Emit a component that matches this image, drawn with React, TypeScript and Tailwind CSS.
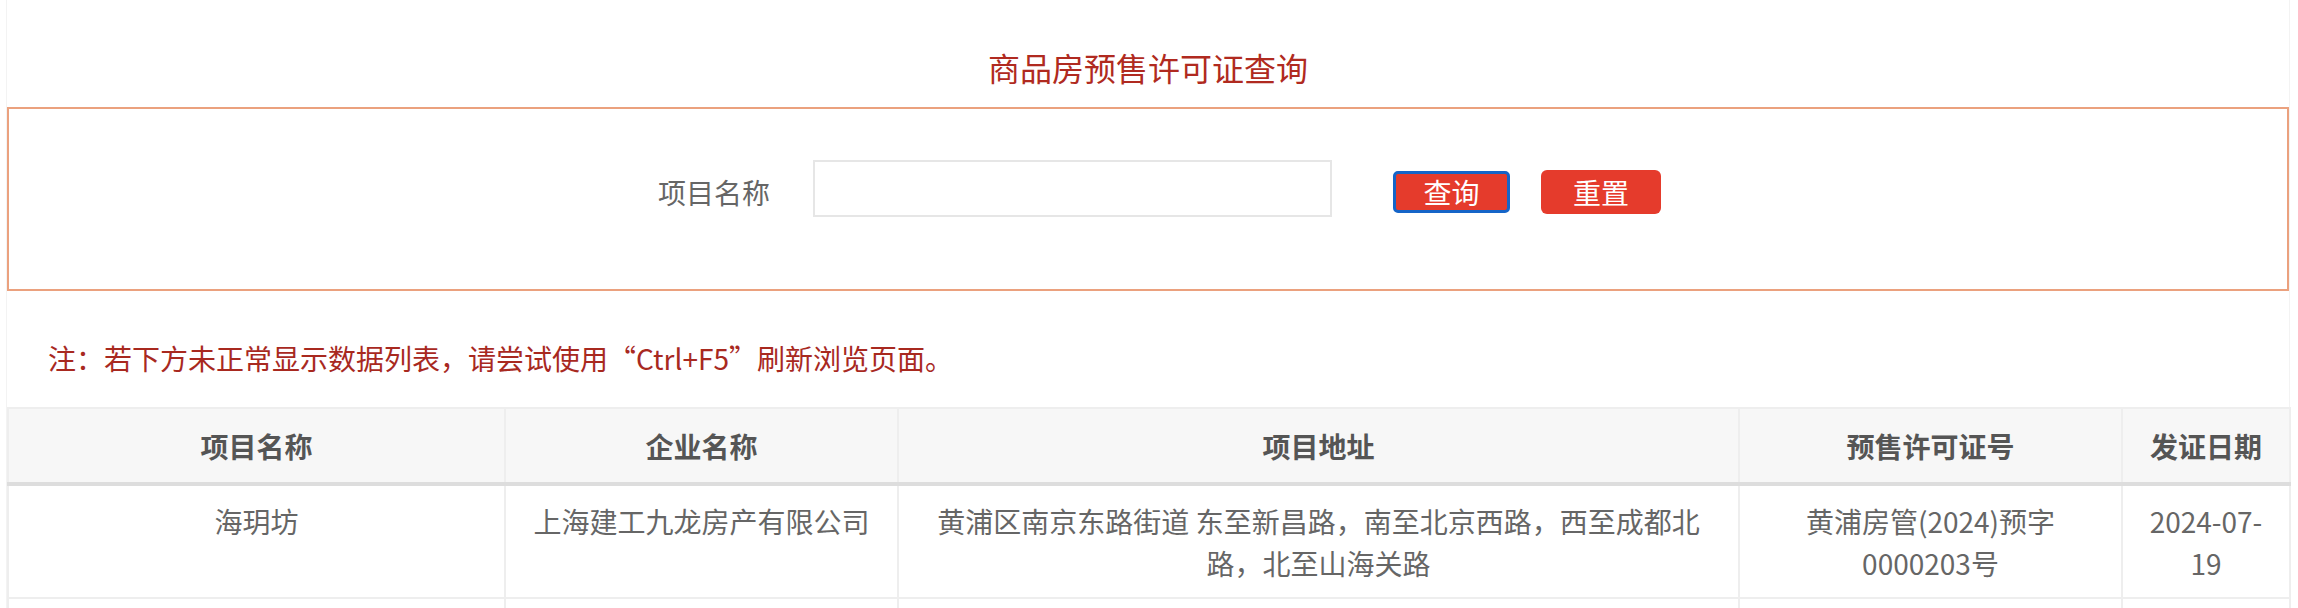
const rows = [
  {
    name: "海玥坊",
    company: "上海建工九龙房产有限公司",
    address: ["黄浦区南京东路街道 东至新昌路，南至北京西路，西至成都北", "路，北至山海关路"],
    permit: ["黄浦房管(2024)预字", "0000203号"],
    date: ["2024-07-", "19"],
  },
];

function Lines({ parts }: { parts: string[] }) {
  return (
    <>
      {parts.map((p, i) => (
        <span key={i}>
          {i > 0 && <br />}
          {p}
        </span>
      ))}
    </>
  );
}

export default function App() {
  return (
    <div
      lang="zh-CN"
      className="w-[2298px] h-[608px] overflow-hidden bg-white font-['Noto_Sans_CJK_SC','Noto_Sans',sans-serif]"
    >
      <div className="ml-[6px] w-[2284px] min-h-[608px] border-x border-[#f3f3f3]">
        <h1 className="h-[107px] pt-[51px] text-center text-[32px] leading-[32px] font-normal text-[#b02a20]">
          商品房预售许可证查询
        </h1>

        <div className="h-[184px] border-2 border-[#eba17e] pt-[51px]">
          <div className="flex justify-center pl-[23px] h-[57px]">
            <label className="w-[155px] pt-[11px] text-[28px] leading-[42px] text-[#666] self-start">
              项目名称
            </label>
            <input
              type="text"
              className="w-[519px] h-[57px] border-2 border-[#e6e6e6] outline-none px-3 text-[26px] text-[#333]"
            />
            <button
              type="button"
              className="ml-[61px] mt-[11px] w-[117px] h-[42px] rounded-[5px] border-[3px] border-[#1565c8] bg-[#e53b2c] text-white text-[28px] leading-none flex items-center justify-center"
            >
              查询
            </button>
            <button
              type="button"
              className="ml-[31px] mt-[10px] w-[120px] h-[44px] rounded-[6px] bg-[#e53b2c] text-white text-[28px] leading-none flex items-center justify-center"
            >
              重置
            </button>
          </div>
        </div>

        <p className="mt-[46px] pl-[41px] text-[28px] leading-[42px] text-[#a8291f]">
          注：若下方未正常显示数据列表，请尝试使用“Ctrl+F5”刷新浏览页面。
        </p>

        <table className="mt-[28px] w-full table-fixed border-collapse">
          <colgroup>
            <col className="w-[497px]" />
            <col className="w-[393px]" />
            <col className="w-[841px]" />
            <col className="w-[383px]" />
            <col className="w-[168px]" />
          </colgroup>
          <thead>
            <tr className="bg-[#f7f7f7] h-[76px]">
              {["项目名称", "企业名称", "项目地址", "预售许可证号", "发证日期"].map((h) => (
                <th
                  key={h}
                  className="border-2 border-b-4 border-[#eee] border-b-[#ddd] text-[28px] font-bold text-[#555] text-center align-middle"
                >
                  {h}
                </th>
              ))}
            </tr>
          </thead>
          <tbody>
            {rows.map((r) => (
              <tr key={r.name}>
                <td className="border-2 border-[#eee] px-[10px] pt-[14px] pb-[13px] align-top text-center text-[28px] leading-[42px] text-[#666] whitespace-nowrap">
                  {r.name}
                </td>
                <td className="border-2 border-[#eee] px-[10px] pt-[14px] pb-[13px] align-top text-center text-[28px] leading-[42px] text-[#666] whitespace-nowrap">
                  {r.company}
                </td>
                <td className="border-2 border-[#eee] px-[10px] pt-[14px] pb-[13px] align-top text-center text-[28px] leading-[42px] text-[#666] whitespace-nowrap">
                  <Lines parts={r.address} />
                </td>
                <td className="border-2 border-[#eee] px-[10px] pt-[14px] pb-[13px] align-top text-center text-[28px] leading-[42px] text-[#666] whitespace-nowrap">
                  <Lines parts={r.permit} />
                </td>
                <td className="border-2 border-[#eee] px-[10px] pt-[14px] pb-[13px] align-top text-center text-[28px] leading-[42px] text-[#666] whitespace-nowrap">
                  <Lines parts={r.date} />
                </td>
              </tr>
            ))}
            <tr className="h-[112px]">
              <td className="border-2 border-[#eee]" />
              <td className="border-2 border-[#eee]" />
              <td className="border-2 border-[#eee]" />
              <td className="border-2 border-[#eee]" />
              <td className="border-2 border-[#eee]" />
            </tr>
          </tbody>
        </table>
      </div>
    </div>
  );
}
